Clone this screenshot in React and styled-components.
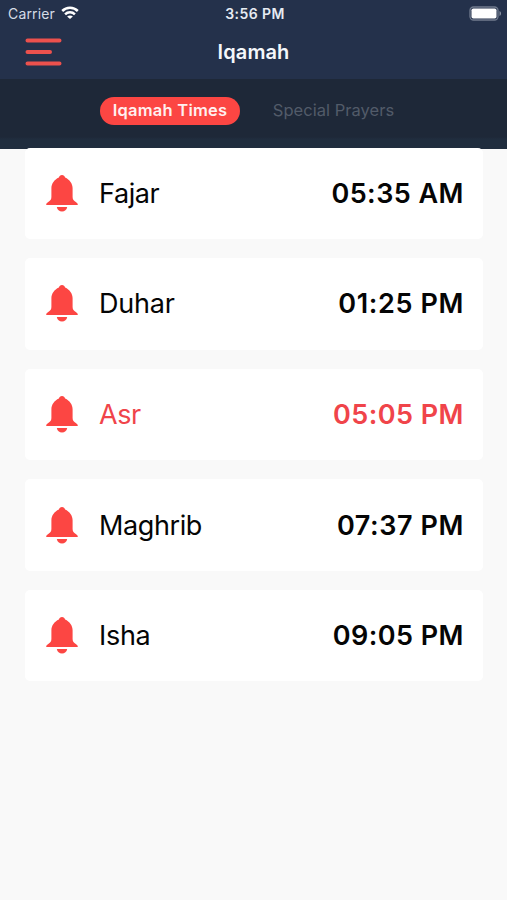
import React from "react";
import styled, { createGlobalStyle } from "styled-components";

const GlobalStyle = createGlobalStyle`
  *, *::before, *::after { box-sizing: border-box; }
  body { margin: 0; background: #f9f9f9; }
`;

const Screen = styled.main`
  display: flex;
  flex-direction: column;
  width: 100%;
  height: 900px;
  overflow: hidden;
  background: #f9f9f9;
  color: #050505;
  font-family: Inter, "Liberation Sans", sans-serif;
`;

const Header = styled.header`
  height: 79px;
  flex: none;
  background: #24314b;
  color: #f4f7fb;
`;

const StatusBar = styled.div`
  display: grid;
  grid-template-columns: 1fr auto 1fr;
  align-items: center;
  height: 27px;
  padding: 0 5px 0 8px;
  font-size: 14px;
`;

const Carrier = styled.div`
  display: flex;
  align-items: center;
  gap: 6px;
  color: #d5dce6;
  letter-spacing: 0.15px;
  svg { display: block; margin-bottom: 2px; }
`;

const Clock = styled.time`
  color: #e6ebf2;
  font-size: 14px;
  font-weight: 600;
  letter-spacing: 0.4px;
`;

const BatteryIcon = styled.svg`
  justify-self: end;
  display: block;
`;

const TitleBar = styled.div`
  display: grid;
  grid-template-columns: 1fr auto 1fr;
  align-items: center;
  height: 50px;
  padding: 0 25px;
`;

const MenuButton = styled.button`
  width: 37px;
  height: 28px;
  padding: 0;
  border: 0;
  background: none;
  svg { display: block; }
`;

const Title = styled.h1`
  margin: 0;
  font-size: 20px;
  line-height: 26px;
  font-weight: 600;
  letter-spacing: 0.1px;
`;

const Tabs = styled.nav`
  display: flex;
  flex: none;
  height: 70px;
  padding: 18px 0 0 100px;
  gap: 21px;
  background: linear-gradient(#1e2838 0 58px, #202d3e 60px);
`;

const Tab = styled.button`
  height: 28px;
  width: ${({ $active }) => ($active ? "140px" : "145px")};
  padding: 0 0 2px;
  border: 0;
  border-radius: 14px;
  font: inherit;
  font-size: 16.5px;
  line-height: 26px;
  white-space: nowrap;
  font-weight: ${({ $active }) => ($active ? 600 : 400)};
  letter-spacing: ${({ $active }) => ($active ? "0.24px" : "0.03px")};
  background: ${({ $active }) => ($active ? "#fc4643" : "transparent")};
  color: ${({ $active }) => ($active ? "#fff0f0" : "#525b69")};
`;

const List = styled.ul`
  display: flex;
  flex-direction: column;
  gap: 19px;
  margin: -1.5px 0 0;
  padding: 0 24.5px 0 25px;
  list-style: none;
`;

const Card = styled.li`
  display: flex;
  align-items: center;
  height: 91.6px;
  padding: 0 19px 0 21px;
  border-radius: 5px;
  background: #fff;
  color: ${({ $current }) => ($current ? "#f0444a" : "#050505")};
  font-size: 27px;
`;

const Bell = styled.svg`
  flex: none;
  display: block;
  color: #fc4643;
`;

const Prayer = styled.span`
  margin-left: 21px;
  letter-spacing: ${({ $spacing }) => $spacing}px;
`;

const Time = styled.time`
  margin-left: auto;
  font-weight: 600;
  letter-spacing: ${({ $spacing }) => $spacing}px;
  margin-right: ${({ $spacing }) => -$spacing}px;
`;

const prayers = [
  { name: "Fajar", time: "05:35 AM", nameSpacing: -0.4, timeSpacing: 0.45 },
  { name: "Duhar", time: "01:25 PM", nameSpacing: -0.2, timeSpacing: 0.65 },
  { name: "Asr", time: "05:05 PM", nameSpacing: -0.4, timeSpacing: 0.45 },
  { name: "Maghrib", time: "07:37 PM", nameSpacing: -0.4, timeSpacing: 0.6 },
  { name: "Isha", time: "09:05 PM", nameSpacing: -0.3, timeSpacing: 0.45 },
];

const currentPrayer = "Asr";

function WifiIcon() {
  return (
    <svg width="18" height="13" viewBox="0 0 18 13" fill="none" stroke="#fff" strokeWidth="2.5">
      <path d="M1.2 5C5.5.8 12.5.8 16.800 5" />
      <path d="M4.100 8.300c2.700-2.700 7.100-2.700 9.800 0" />
      <path d="M6.100 10.500c1.600-1.500 4.200-1.500 5.800 0L9 13Z" fill="#fff" stroke="none" />
    </svg>
  );
}

function BellIcon() {
  return (
    <Bell width="32" height="37" viewBox="0 0 32 37" fill="currentColor" aria-hidden="true">
      <path d="M16 0c-1.6 0-2.7 1-3.1 2.4C8.4 4.5 5.4 8.400 5.400 13.200V22c0 2.500-1.300 3.800-3.200 5C.8 27.900.2 28.700.2 30h31.600c0-1.300-.6-2.100-2-3-1.900-1.200-3.200-2.500-3.200-5v-8.800c0-4.800-3-8.700-7.500-10.800C18.700 1 17.600 0 16 0Z" />
      <path d="M10.800 32h10.400c-.5 2.800-2.500 4.500-5.200 4.500s-4.700-1.700-5.200-4.500Z" />
    </Bell>
  );
}

export default function App() {
  return (
    <Screen>
      <GlobalStyle />
      <Header>
        <StatusBar>
          <Carrier>Carrier <WifiIcon /></Carrier>
          <Clock>3:56 PM</Clock>
          <BatteryIcon width="33" height="15" viewBox="0 0 33 15">
            <rect x="1" y="1" width="28" height="13" rx="3.5" fill="none" stroke="#717b8e" strokeWidth="1.3" />
            <rect x="2.5" y="2.5" width="25" height="10" rx="1.8" fill="#fff" />
            <path d="M30.5 5v5c2-.8 2-4.2 0-5Z" fill="#8b94a4" />
          </BatteryIcon>
        </StatusBar>
        <TitleBar>
          <MenuButton aria-label="Menu">
            <svg width="37" height="28" viewBox="0 0 37 28" stroke="#ec514d" strokeWidth="4" strokeLinecap="round">
              <path d="M2.5 2.5h32M2.5 14h22.5M2.5 25.5h32" />
            </svg>
          </MenuButton>
          <Title>Iqamah</Title>
        </TitleBar>
      </Header>
      <Tabs>
        <Tab $active>Iqamah Times</Tab>
        <Tab>Special Prayers</Tab>
      </Tabs>
      <List>
        {prayers.map((p) => (
          <Card key={p.name} $current={p.name === currentPrayer}>
            <BellIcon />
            <Prayer $spacing={p.nameSpacing}>{p.name}</Prayer>
            <Time $spacing={p.timeSpacing}>{p.time}</Time>
          </Card>
        ))}
      </List>
    </Screen>
  );
}
